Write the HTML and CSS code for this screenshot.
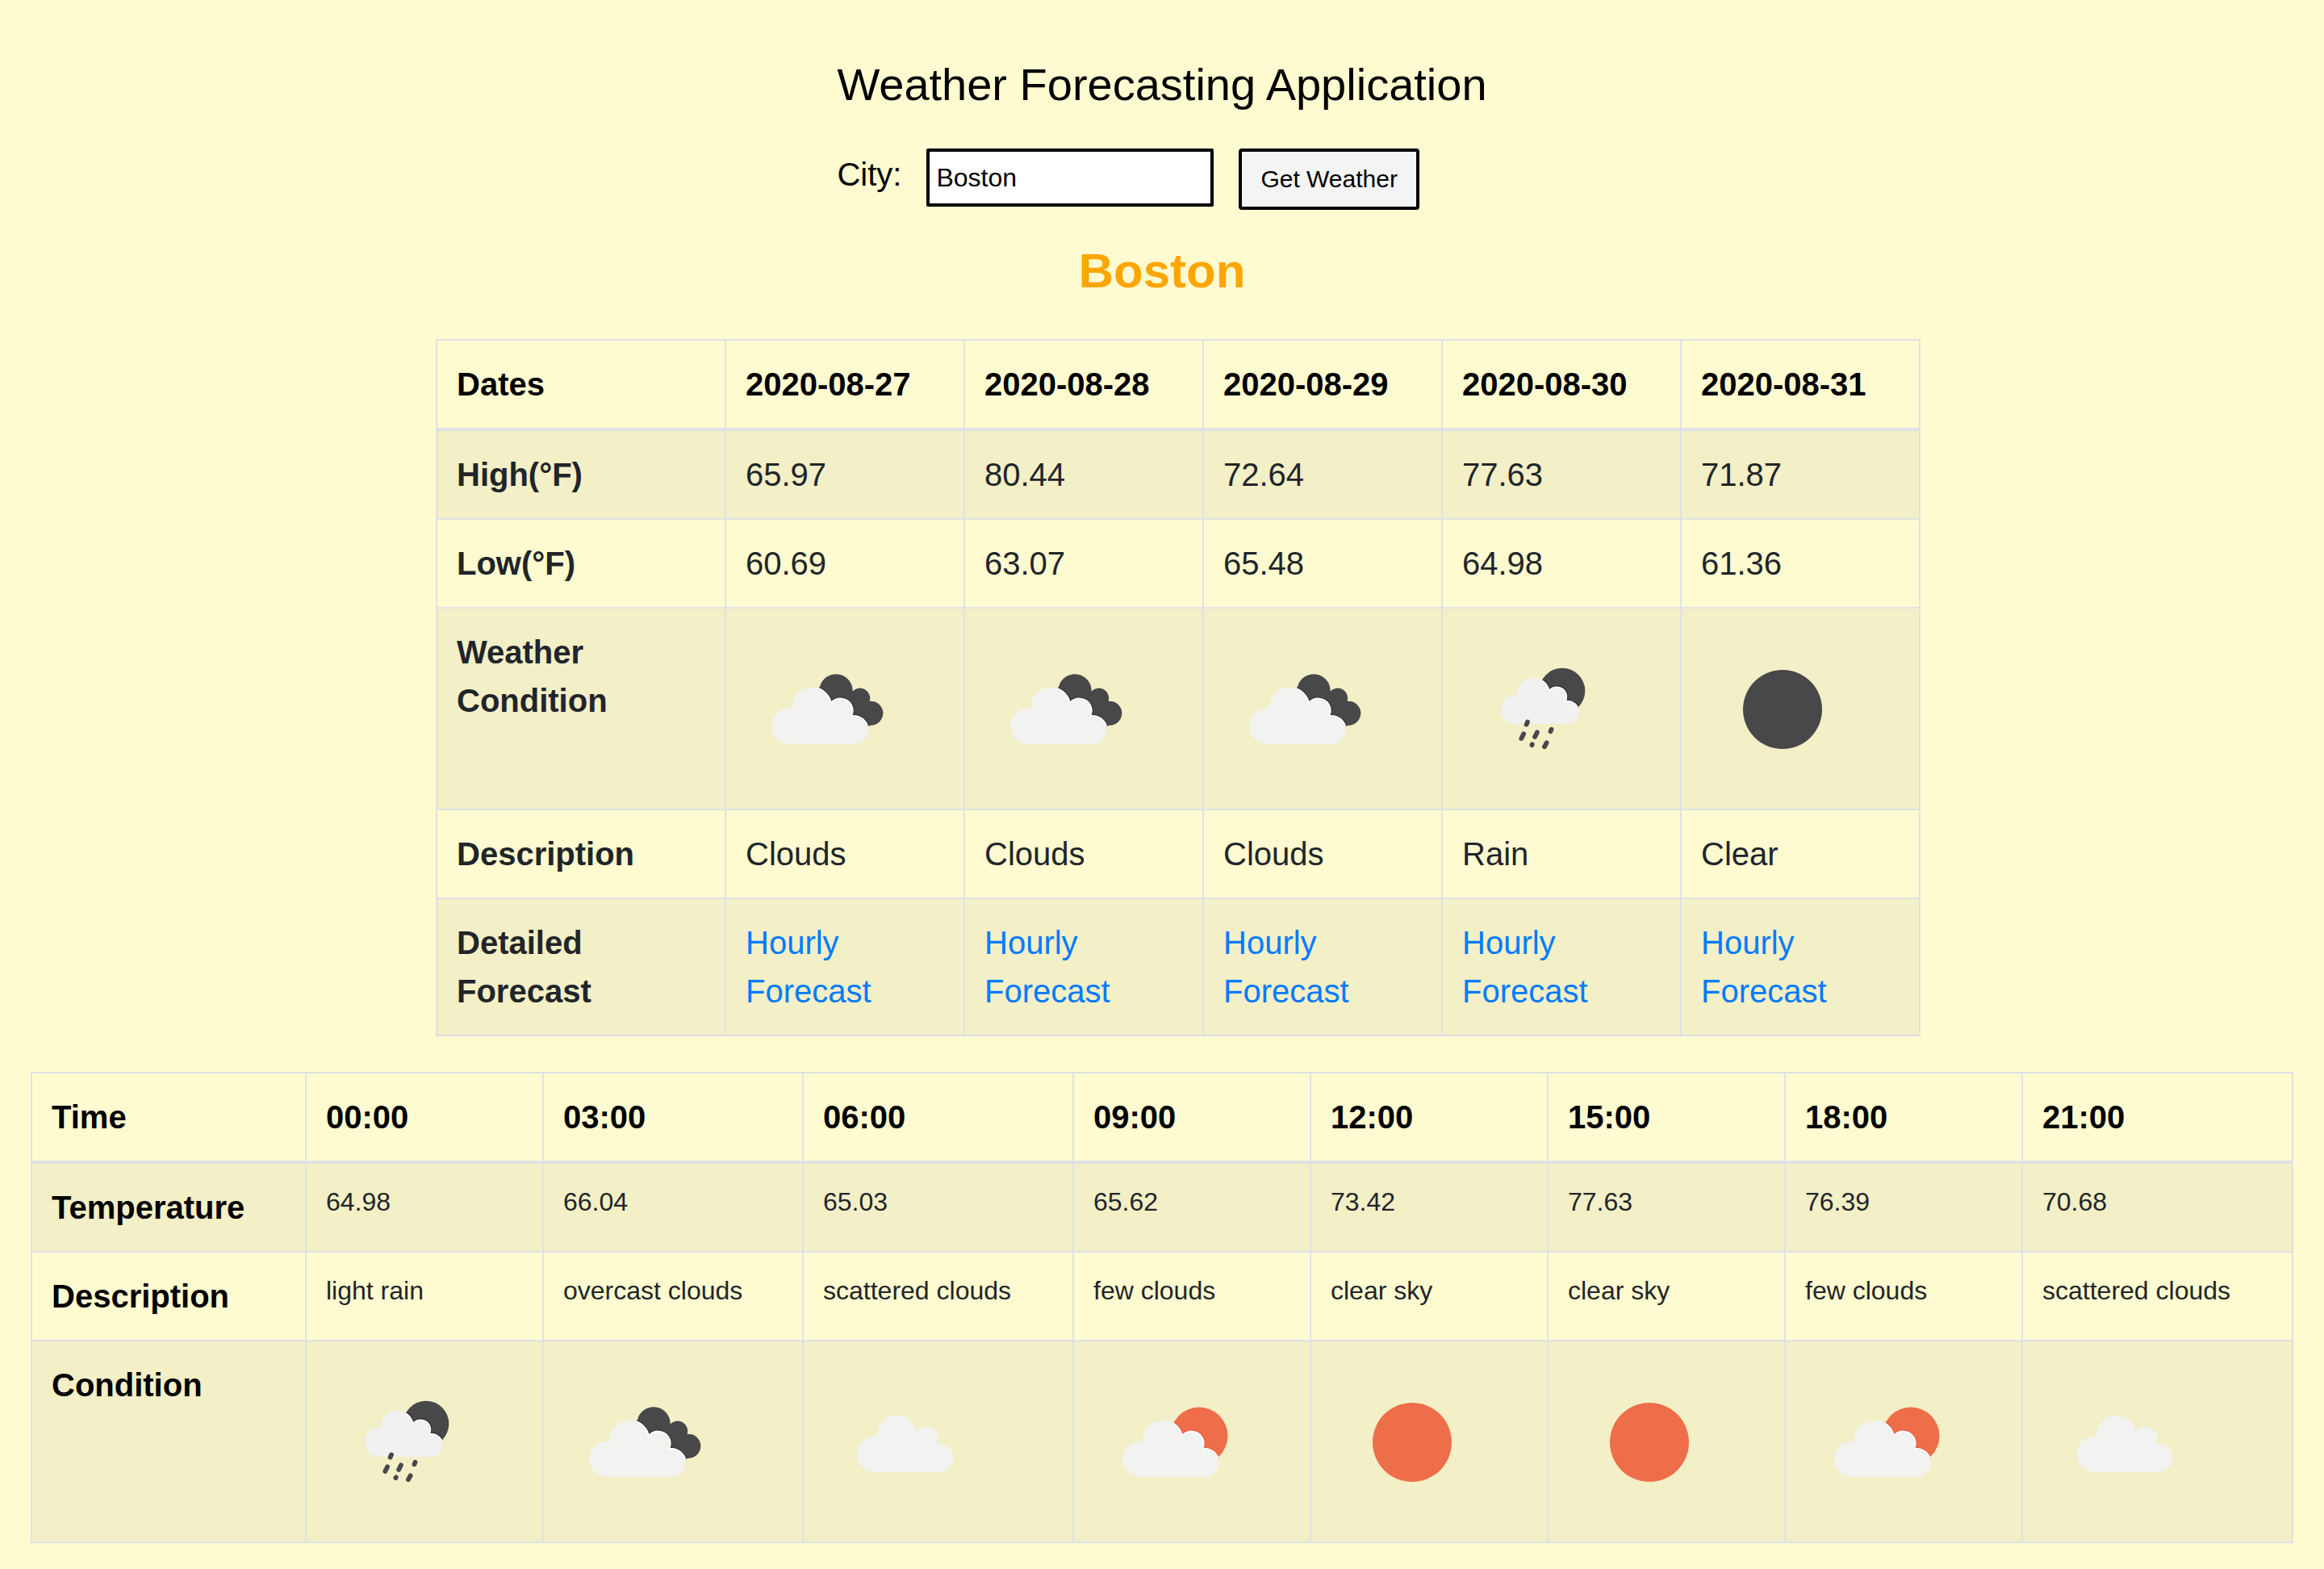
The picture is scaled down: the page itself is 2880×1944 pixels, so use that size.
FILE: index.html
```html
<!DOCTYPE html>
<html lang="en">
<head>
<meta charset="utf-8">
<meta name="viewport" content="width=device-width, initial-scale=1">
<title>Weather Forecasting Application</title>
<link rel="stylesheet" href="styles.css">
</head>
<body>
<svg class="sprite" aria-hidden="true">
  <defs>
    <path id="cloud" d="M54.3 144A22.3 22.3 0 0 1 54.3 99.4L57 99.4A24.8 24.8 0 0 1 106 93A15 15 0 0 1 131 109.3A17.5 17.5 0 1 1 133.7 144Z"/>
    <path id="back-cloud" d="M92 73A20.6 20.6 0 0 1 132.6 78.5A12.5 12.5 0 0 1 153.6 90.8A15 15 0 1 1 155.3 120.7L110 130L80 90Z"/>
    <clipPath id="clip-back"><use href="#back-cloud"/></clipPath>
    <clipPath id="clip-sun"><circle cx="131" cy="93" r="35.5"/></clipPath>
    <clipPath id="clip-moon"><circle cx="124" cy="78" r="28.3"/></clipPath>
    <symbol id="overcast" viewBox="0 0 200 200">
      <use href="#back-cloud" fill="#48484a"/>
      <g clip-path="url(#clip-back)"><use href="#cloud" fill="none" stroke="#2c2c2e" stroke-width="4"/></g>
      <use href="#cloud" fill="#f2f2f0"/>
      <g clip-path="url(#clip-back)"><use href="#cloud" fill="#f2f2f0" stroke="#fff" stroke-width="2"/></g>
    </symbol>
    <symbol id="scattered" viewBox="0 0 200 200">
      <use href="#cloud" x="10" y="-6" fill="#f2f2f0"/>
    </symbol>
    <symbol id="few-day" viewBox="0 0 200 200">
      <circle cx="131" cy="93" r="35.5" fill="#ee6e4a"/>
      <g clip-path="url(#clip-sun)"><use href="#cloud" x="4" fill="none" stroke="#f0552c" stroke-width="4"/></g>
      <use href="#cloud" x="4" fill="#f2f2f0"/>
      <g clip-path="url(#clip-sun)"><use href="#cloud" x="4" fill="#f2f2f0" stroke="#f6fbfd" stroke-width="2"/></g>
    </symbol>
    <symbol id="clear-day" viewBox="0 0 200 200">
      <circle cx="101" cy="101" r="49" fill="#ee6e4a"/>
    </symbol>
    <symbol id="clear-night" viewBox="0 0 200 200">
      <circle cx="101" cy="101" r="49" fill="#48484a"/>
    </symbol>
    <symbol id="rain-night" viewBox="0 0 200 200">
      <circle cx="124" cy="78" r="28.3" fill="#48484a"/>
      <g clip-path="url(#clip-moon)"><use href="#cloud" transform="translate(22 2.4) scale(.81)" fill="none" stroke="#2c2c2e" stroke-width="5"/></g>
      <use href="#cloud" transform="translate(22 2.4) scale(.81)" fill="#f1f1f2"/>
      <g clip-path="url(#clip-moon)"><use href="#cloud" transform="translate(22 2.4) scale(.81)" fill="#f1f1f2" stroke="#fff" stroke-width="2"/></g>
      <path d="M79.6 119.6L81 116.4M73.3 137L76.1 131.4M90.1 135L92.9 129.4M109.5 128.3L110.5 125.7M86.4 145.1L86.8 144.3M102 147.2L104.6 142.4" fill="none" stroke="#48484a" stroke-width="5.8" stroke-linecap="round"/>
    </symbol>
  </defs>
</svg>

<header class="top">
  <h1 class="title">Weather Forecasting Application</h1>
  <form class="search">
    <label class="search-label" for="city">City:</label>
    <input class="search-input" id="city" name="city" type="text" value="Boston">
    <button class="search-button" type="button">Get Weather</button>
  </form>
</header>

<main>
  <h2 class="city">Boston</h2>

  <section class="daily">
    <table class="forecast">
      <colgroup><col class="col-day-label"><col class="col-day" span="5"></colgroup>
      <thead>
        <tr><th scope="col">Dates</th><th scope="col">2020-08-27</th><th scope="col">2020-08-28</th><th scope="col">2020-08-29</th><th scope="col">2020-08-30</th><th scope="col">2020-08-31</th></tr>
      </thead>
      <tbody>
        <tr><th scope="row">High(°F)</th><td>65.97</td><td>80.44</td><td>72.64</td><td>77.63</td><td>71.87</td></tr>
        <tr><th scope="row">Low(°F)</th><td>60.69</td><td>63.07</td><td>65.48</td><td>64.98</td><td>61.36</td></tr>
        <tr>
          <th scope="row">Weather Condition</th>
          <td><svg class="icon" role="img" aria-label="Clouds"><use href="#overcast"/></svg></td>
          <td><svg class="icon" role="img" aria-label="Clouds"><use href="#overcast"/></svg></td>
          <td><svg class="icon" role="img" aria-label="Clouds"><use href="#overcast"/></svg></td>
          <td><svg class="icon" role="img" aria-label="Rain"><use href="#rain-night"/></svg></td>
          <td><svg class="icon" role="img" aria-label="Clear"><use href="#clear-night"/></svg></td>
        </tr>
        <tr><th scope="row">Description</th><td>Clouds</td><td>Clouds</td><td>Clouds</td><td>Rain</td><td>Clear</td></tr>
        <tr>
          <th scope="row">Detailed Forecast</th>
          <td><a class="link" href="#hourly">Hourly Forecast</a></td>
          <td><a class="link" href="#hourly">Hourly Forecast</a></td>
          <td><a class="link" href="#hourly">Hourly Forecast</a></td>
          <td><a class="link" href="#hourly">Hourly Forecast</a></td>
          <td><a class="link" href="#hourly">Hourly Forecast</a></td>
        </tr>
      </tbody>
    </table>
  </section>

  <section class="hourly" id="hourly">
    <table class="forecast forecast-hourly">
      <colgroup><col class="col-hour-label"><col class="col-hour"><col class="col-hour-wide"><col><col class="col-hour" span="4"><col></colgroup>
      <thead>
        <tr><th scope="col">Time</th><th scope="col">00:00</th><th scope="col">03:00</th><th scope="col">06:00</th><th scope="col">09:00</th><th scope="col">12:00</th><th scope="col">15:00</th><th scope="col">18:00</th><th scope="col">21:00</th></tr>
      </thead>
      <tbody>
        <tr><th scope="row">Temperature</th><td>64.98</td><td>66.04</td><td>65.03</td><td>65.62</td><td>73.42</td><td>77.63</td><td>76.39</td><td>70.68</td></tr>
        <tr><th scope="row">Description</th><td>light rain</td><td>overcast clouds</td><td>scattered clouds</td><td>few clouds</td><td>clear sky</td><td>clear sky</td><td>few clouds</td><td>scattered clouds</td></tr>
        <tr>
          <th scope="row">Condition</th>
          <td><svg class="icon" role="img" aria-label="light rain"><use href="#rain-night"/></svg></td>
          <td><svg class="icon" role="img" aria-label="overcast clouds"><use href="#overcast"/></svg></td>
          <td><svg class="icon" role="img" aria-label="scattered clouds"><use href="#scattered"/></svg></td>
          <td><svg class="icon" role="img" aria-label="few clouds"><use href="#few-day"/></svg></td>
          <td><svg class="icon" role="img" aria-label="clear sky"><use href="#clear-day"/></svg></td>
          <td><svg class="icon" role="img" aria-label="clear sky"><use href="#clear-day"/></svg></td>
          <td><svg class="icon" role="img" aria-label="few clouds"><use href="#few-day"/></svg></td>
          <td><svg class="icon" role="img" aria-label="scattered clouds"><use href="#scattered"/></svg></td>
        </tr>
      </tbody>
    </table>
  </section>
</main>
</body>
</html>
```
FILE: styles.css
```css
*,
*::before,
*::after {
  box-sizing: border-box;
}

body {
  margin: 0;
  padding: 71px 38px 32px;
  background: #fffbd0;
  color: #212529;
  font-family: "Liberation Sans", Arial, sans-serif;
  font-size: 40px;
  line-height: 60px;
}

.sprite {
  display: block;
  width: 0;
  height: 0;
}

.top {
  width: fit-content;
  margin: 0 auto;
  color: #000;
}

.title {
  margin: 0 0 45px;
  font-size: 56px;
  font-weight: 400;
  line-height: 68px;
}

.search {
  display: flex;
  align-items: flex-start;
  gap: 31px;
}

.search-label {
  line-height: 64px;
}

.search-input {
  width: 356px;
  height: 72px;
  padding: 0 8px;
  border: 4px solid #000;
  border-radius: 2px;
  background: #fff;
  color: #000;
  font: 32px "Liberation Sans", Arial, sans-serif;
}

.search-button {
  height: 76px;
  padding: 0 23px;
  border: 4px solid #000;
  border-radius: 4px;
  background: #f4f4f4;
  color: #000;
  font: 30px "Liberation Sans", Arial, sans-serif;
}

.city {
  margin: 40px 0 48px;
  color: #ffa500;
  font-size: 60px;
  line-height: 72px;
  text-align: center;
}

.daily {
  max-width: 1880px;
  margin: 0 auto 44px;
  padding-left: 40px;
}

.forecast {
  width: 100%;
  border-collapse: collapse;
}

.col-day-label {
  width: 358px;
}

.col-day {
  width: 296px;
}

.col-hour-label {
  width: 340px;
}

.col-hour {
  width: 294px;
}

.col-hour-wide {
  width: 322px;
}

.forecast th,
.forecast td {
  padding: 24px;
  border: 2px solid #dee2e6;
  text-align: left;
  vertical-align: top;
}

.forecast thead th {
  border-bottom-width: 4px;
  color: #000;
}

.forecast tbody tr:nth-child(odd) {
  background: #f3efc6;
}

.forecast-hourly th {
  color: #000;
}

.forecast-hourly td {
  font-size: 32px;
  line-height: 46px;
}

.icon {
  display: block;
  width: 200px;
  height: 200px;
}

.link {
  color: #007bff;
  text-decoration: none;
}
```
